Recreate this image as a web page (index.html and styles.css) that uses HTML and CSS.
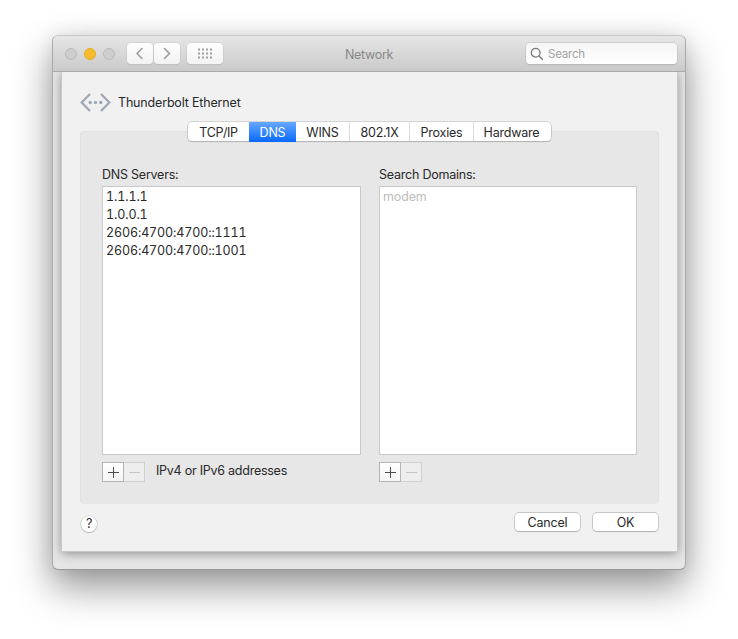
FILE: index.html
```html
<!DOCTYPE html>
<html lang="en">
<head>
<meta charset="utf-8">
<title>Network</title>
<link rel="stylesheet" href="styles.css">
</head>
<body>
<main class="window">
  <header class="titlebar">
    <div class="lights"><i></i><i class="amber"></i><i></i></div>
    <div class="history">
      <button class="tool" aria-label="Back"><svg width="26" height="21" viewBox="0 0 26 21"><path d="M15 5.500 10 10.500l5 5"/></svg></button>
      <button class="tool" aria-label="Forward"><svg width="26" height="21" viewBox="0 0 26 21"><path d="M10.500 5.500 15.500 10.500l-5 5"/></svg></button>
    </div>
    <button class="tool grid" aria-label="Show all"><svg width="36" height="21" viewBox="0 0 36 21"><path class="dots" d="M11 6.500h14M11 10.500h14M11 14.500h14"/></svg></button>
    <h1>Network</h1>
    <div class="search"><svg width="14" height="14" viewBox="0 0 14 14"><circle cx="5.700" cy="5.700" r="4.400"/><path d="m9 9 3.500 3.500"/></svg><span>Search</span></div>
  </header>
  <section class="sheet">
    <div class="service">
      <svg width="32" height="20" viewBox="0 0 32 20"><path d="M10 1 1.700 9.500l8.300 8.500M21 1l8.300 8.500L21 18"/><circle cx="10.200" cy="9.500" r="1.700"/><circle cx="15.500" cy="9.500" r="1.700"/><circle cx="20.800" cy="9.500" r="1.700"/></svg>
      <span>Thunderbolt Ethernet</span>
    </div>
    <div class="panel">
      <nav class="tabs"><span class="t1">TCP/IP</span><span class="t2 active">DNS</span><span class="t3">WINS</span><span class="t4">802.1X</span><span class="t5">Proxies</span><span class="t6">Hardware</span></nav>
      <div class="columns">
        <div class="column">
          <label>DNS Servers:</label>
          <ul class="list addresses"><li>1.1.1.1</li><li>1.0.0.1</li><li>2606:4700:4700::1111</li><li>2606:4700:4700::1001</li></ul>
          <div class="edit"><button class="plus" aria-label="Add"></button><button class="minus" aria-label="Remove"></button><span>IPv4 or IPv6 addresses</span></div>
        </div>
        <div class="column">
          <label>Search Domains:</label>
          <ul class="list domains"><li>modem</li></ul>
          <div class="edit"><button class="plus" aria-label="Add"></button><button class="minus" aria-label="Remove"></button></div>
        </div>
      </div>
    </div>
    <footer class="actions"><button class="help">?</button><button class="push cancel">Cancel</button><button class="push">OK</button></footer>
  </section>
</main>
</body>
</html>
```
FILE: styles.css
```css
* { box-sizing: border-box; }
body { margin: 0; width: 738px; height: 639px; overflow: hidden; padding: 35px 0 0 52px; background: #fff; font: 12.500px/18px Inter, "Liberation Sans", sans-serif; letter-spacing: -.2px; color: #292929; }
button { font: inherit; letter-spacing: inherit; color: inherit; padding: 0; margin: 0; border: 0; }
svg { display: block; fill: none; }
.window { width: 634px; height: 535px; border: 1px solid #aaa; border-top-color: #c6c6c6; border-bottom-color: #999; border-radius: 6px; background: #e5e5e5; box-shadow: 0 17px 38px rgba(0,0,0,.42), 0 0 18px rgba(0,0,0,.08); overflow: hidden; }
.titlebar { display: flex; align-items: center; height: 36px; padding: 0 8px 0 12px; border-bottom: 1px solid #aaa; background: linear-gradient(#e6e6e6, #cacaca); position: relative; z-index: 2; }
.lights { display: flex; gap: 7px; width: 62px; }
.lights i { width: 12px; height: 12px; border: 1px solid #b9b9b9; border-radius: 50%; background: #cecece; }
.lights .amber { background: #f8bb2d; border-color: #e6aa25; }
.history { display: flex; gap: 1px; margin-right: 7px; margin-left: -.500px; }
.tool { width: 26px; height: 21px; border-radius: 4px; background: linear-gradient(#fdfdfd, #f3f3f3); box-shadow: 0 0 0 .5px #c5c5c5, 0 1px 1px #b8b8b8; }
.tool path { stroke: #999; stroke-width: 1.500; stroke-linecap: round; stroke-linejoin: round; }
.tool .dots { stroke: #a0a0a0; stroke-width: 2; stroke-dasharray: 2 2; stroke-linecap: butt; }
.grid { width: 36px; }
h1 { margin: 0 0 0 122.500px; font-size: 12.500px; font-weight: 400; color: #888; letter-spacing: -.3px; width: 180px; line-height: 20px; padding-top: 2px; }
.search { width: 151px; height: 21px; margin-left: auto; display: flex; align-items: center; padding-left: 4px; gap: 4px; border-radius: 4px; color: #a2a2a2; background: linear-gradient(#f5f5f5, #fff); box-shadow: 0 0 0 .5px #bebebe, 0 1px 1px #b0b0b0; font-size: 11.500px; }
.search svg { stroke: #777; stroke-width: 1.300; stroke-linecap: round; }
.sheet { width: 615px; height: 479px; margin-left: 9px; padding: 21px 18px 0 18px; background: #f1f1f1; box-shadow: 0 0 0 1px #c9c9c9, 0 2px 10px rgba(0,0,0,.42); }
.service { display: flex; align-items: center; gap: 6px; height: 20px; letter-spacing: -.17px; }
.service svg { stroke: #a1a8b5; stroke-width: 2.300; }
.service circle { fill: #a1a8b5; stroke: none; }
.panel { width: 579px; height: 373px; margin-top: 18px; border: 1px solid #e1e1e1; border-bottom-color: #e6e6e6; border-radius: 4px; background: #e7e7e7; }
.tabs { display: flex; width: 363px; height: 19px; margin: -10px 0 0 107px; border-radius: 4px; background: #fff; box-shadow: 0 0 0 .6px #b8b8b8, 0 1px 1px #b0b0b0; line-height: 21px; text-align: center; }
.tabs span { height: 19px; border-right: 1px solid #ddd; }
.tabs .t1 { width: 61px; border: 0; letter-spacing: -.4px; }
.tabs .t2 { width: 47px; height: 20px; border: 0; color: #fff; background: linear-gradient(#66a8ff, #0868ff); }
.tabs .t3 { width: 54px; }
.tabs .t4 { width: 60px; }
.tabs .t5 { width: 64px; }
.tabs .t6 { width: 75px; border: 0; }
.columns { display: flex; gap: 18px; padding: 25px 0 0 21px; }
.column { width: 259px; }
.column label { display: block; height: 20px; line-height: 18px; letter-spacing: -.23px; }
.list { height: 269px; margin: 0; padding: 1px 3px; list-style: none; border: 1px solid #c9c9c9; background: #fff; letter-spacing: -.13px; }
.addresses { font-variant-numeric: tabular-nums; }
.domains { width: 258px; color: #bdbdbd; }
.edit { display: flex; height: 20px; margin-top: 7px; }
.edit button { height: 20px; width: 22px; border: 1px solid #b4b4b4; background: linear-gradient(#fff, #f4f4f4); display: grid; place-items: center; }
.edit button::before, .edit .plus::after { content: ""; grid-area: 1 / 1; width: 11px; height: 1px; background: #4c4c4c; }
.edit .plus::after { width: 1px; height: 11px; }
.edit .minus { width: 21px; border-color: #d0d0d0; border-left: 0; background: #eee; }
.edit .minus::before { background: #c5c5c5; }
.edit span { margin-left: 11px; line-height: 17px; letter-spacing: -.25px; }
.actions { display: flex; align-items: center; height: 20px; margin-top: 8px; width: 579px; }
.help { width: 16px; height: 16px; border-radius: 50%; background: #fff; margin: 3px auto 0 1px; line-height: 16px; box-shadow: 0 0 0 .6px #bbb, 0 1px 1px #bbb; }
.push { width: 65px; height: 18px; margin-right: 1px; border-radius: 4px; background: #fff; box-shadow: 0 0 0 .7px #b9b9b9, 0 1px 1px #b0b0b0; line-height: 19px; }
.cancel { margin-right: 13px; letter-spacing: -.2px; }
```
